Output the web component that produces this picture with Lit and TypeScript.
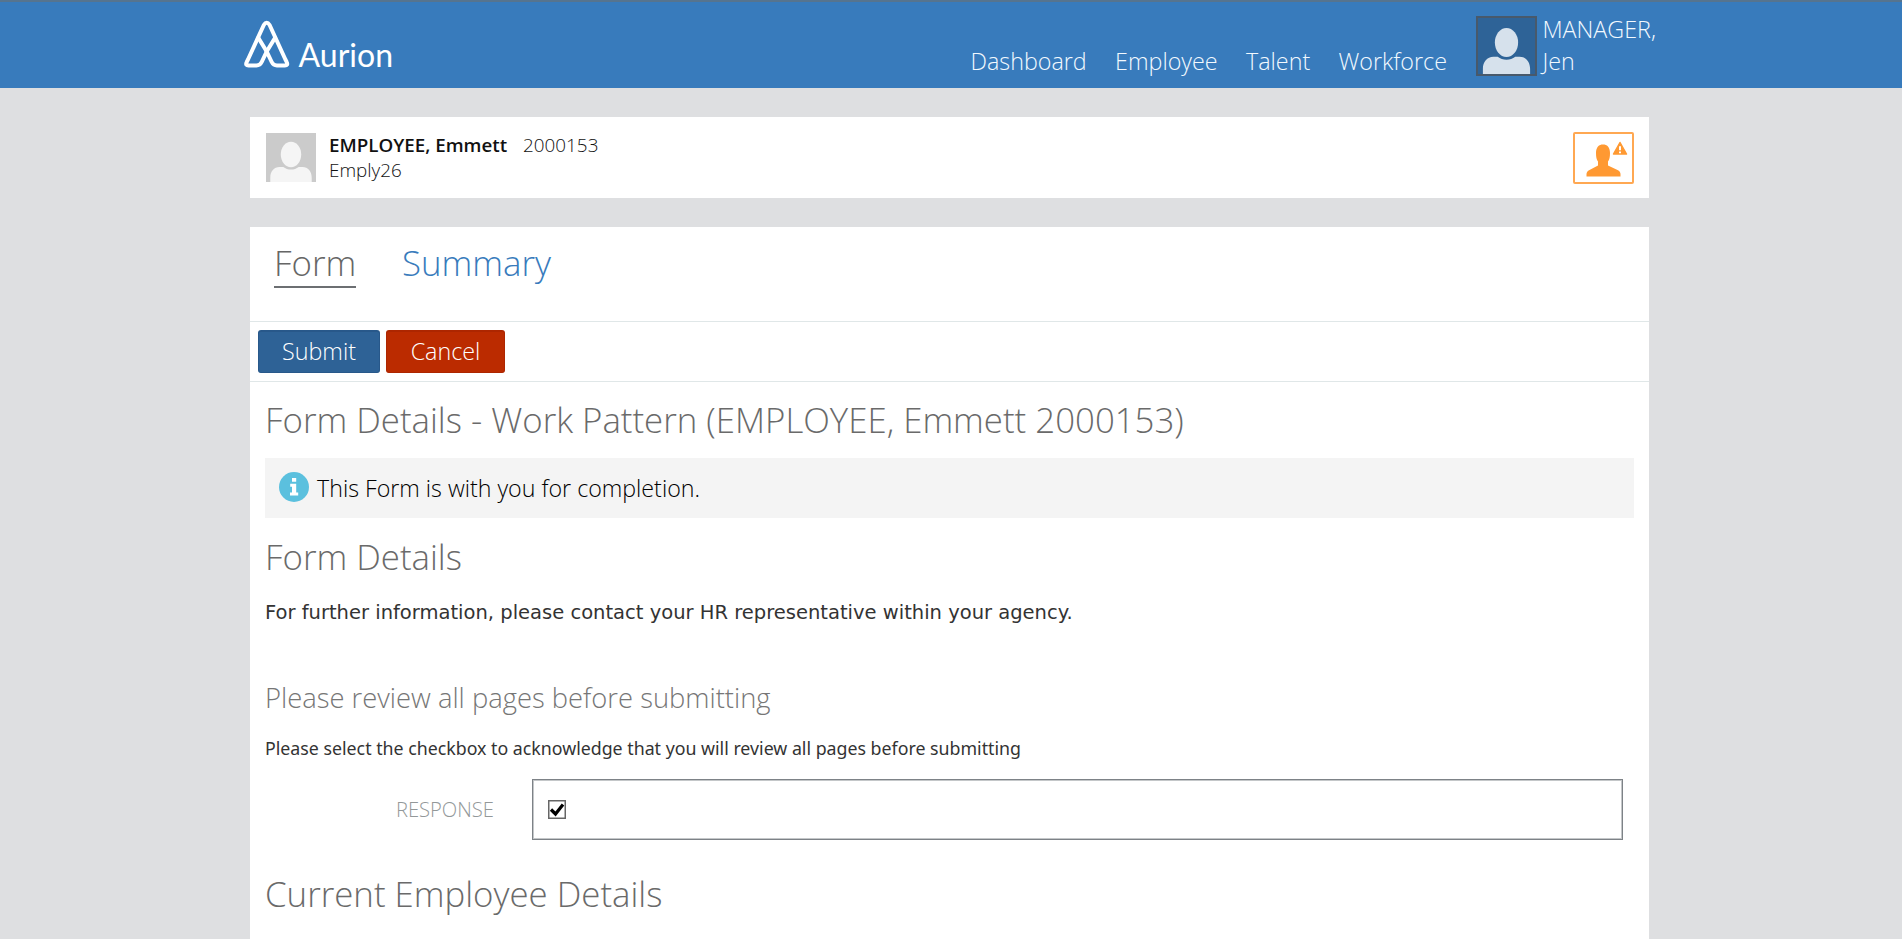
import { LitElement, html, css } from "lit";
import { customElement } from "lit/decorators.js";

@customElement("user-avatar")
class UserAvatar extends LitElement {
  static styles = css`
    :host { display: block; }
    svg { display: block; width: 100%; height: 100%; }
  `;
  render() {
    return html`<svg viewBox="0 0 50 49" preserveAspectRatio="none" fill="currentColor">
      <ellipse cx="25" cy="21.5" rx="10.2" ry="12.7"></ellipse>
      <path d="M4.3 49v-4.500C4.300 38.500 8 34 13.500 34h3.800c2.200 1.700 4.800 2.600 7.700 2.600s5.500-.9 7.700-2.600h3.800c5.500 0 9.200 4.500 9.200 10.500V49z"></path>
    </svg>`;
  }
}

@customElement("aurion-logo")
class AurionLogo extends LitElement {
  static styles = css`
    :host { display: block; }
    svg { display: block; overflow: visible; }
    .mark { fill: none; stroke: #fff; stroke-width: 4; stroke-linejoin: round; stroke-linecap: round; }
    .word { font: 400 32px Lato, "Open Sans", sans-serif; fill: #fff; }
  `;
  render() {
    return html`<svg width="160" height="56" viewBox="0 0 160 56">
      <g class="mark">
        <path d="M22.700 31.500L14.300 17.700"></path>
        <path d="M22.700 31.500L31.100 17.700"></path>
        <path d="M22.700 31.500L17.700 42Q16 45.500 12.500 45.500H4.500Q1.200 45.500 2.600 42.300Q3 41.300 4 39.500L19.800 5Q22.700 .5 25.600 5L41.400 39.500Q42.400 41.300 42.800 42.300Q44.200 45.500 40.900 45.500H32.900Q29.400 45.500 27.700 42Z"></path>
      </g>
      <text class="word" x="54.500" y="47" textLength="94.500" lengthAdjust="spacingAndGlyphs">Aurion</text>
    </svg>`;
  }
}

@customElement("app-root")
class AppRoot extends LitElement {
  static styles = css`
    * { box-sizing: border-box; }
    :host {
      display: block; height: 939px; overflow: hidden; background: #dedfe1; color: #111;
      font-family: "Open Sans", "Noto Sans", sans-serif; font-weight: 300;
    }
    h1, h2, h3, p { margin: 0; font-weight: 300; white-space: nowrap; }
    header {
      display: flex; align-items: flex-start; height: 88px; padding-left: 244px;
      background: #387bbc; border-top: 2px solid #56748f; color: #f2f9ff;
      font-size: 23.3px; line-height: 32px;
    }
    aurion-logo { margin-top: 18px; width: 160px; }
    nav { display: flex; gap: 28.4px; margin: 43px 0 0 566.5px; }
    .me { display: flex; margin: 11px 0 0 29.5px; }
    .pic { width: 61px; height: 60px; margin: 3px 5px 0 0; border: 2px solid #48596b; background: #2e6397; color: #d6e1ec; }
    .pic user-avatar { height: 56px; }
    main { width: 1399px; margin-left: 250px; }
    .card { background: #fff; }
    .person { display: flex; height: 81px; margin-top: 29px; padding: 15px 15px 0 16px; font-size: 18.85px; line-height: 25px; }
    .person user-avatar { width: 50px; height: 49px; margin: 1px 13px 0 0; background: #cbcbcb; color: #f5f5f5; }
    .person b { font-weight: 600; font-size: 18.75px; }
    .person .num { margin-left: 16px; }
    .alert { width: 61px; height: 52px; margin-left: auto; border: 2px solid #ffa852; border-radius: 2px; }
    .alert svg { display: block; }
    .form { margin-top: 29px; height: 712px; }
    .tabs { display: flex; height: 95px; padding: 11px 0 0 24px; gap: 46px; border-bottom: 1px solid #e0e7e8; font-size: 34.8px; line-height: 50px; color: #387bbc; }
    .tab { height: 50px; }
    .tab.on { width: 82px; color: #666; border-bottom: 2px solid #6c6f72; }
    .actions { display: flex; gap: 6px; height: 60px; padding: 8px 8px 0; border-bottom: 1px solid #e0e7e8; }
    .btn { height: 43px; padding: 0; border: 1px solid #28588a; border-top-width: 2px; border-radius: 3px; background: #2e6296; color: #fff; font: 300 23.3px/38px "Open Sans", sans-serif; text-align: center; padding-bottom: 2px; }
    .submit { width: 122px; }
    .cancel { width: 119px; background: #bb2b00; border-color: #ad2600; }
    .body { padding: 14px 15px 0; }
    h1, h2 { font-size: 34.8px; line-height: 48px; color: #6a6a6a; }
    .notice { display: flex; align-items: center; height: 60px; margin: 14px 0 15px; padding-left: 14px; gap: 8px; background: #f4f4f4; font-size: 23.23px; line-height: 60px; color: #000; }
    .notice svg { margin-bottom: 2px; }
    .contact { margin-top: 18px; font: 400 19.53px/28px "DejaVu Sans", sans-serif; color: #333; }
    h3 { margin-top: 52px; font-size: 27.36px; line-height: 38px; color: #767676; }
    .ack { margin-top: 18px; font: 400 17.77px/26px "Noto Sans", sans-serif; color: #333; }
    .row { display: flex; height: 61px; margin: 18px 0 30px; }
    .label { width: 267px; padding-right: 38px; text-align: right; font-size: 20.2px; line-height: 61px; color: #939899; }
    .field { display: flex; align-items: center; width: 1091px; border: 1px solid #7d8287; box-shadow: inset 0 0 0 1px #c4c7c9; padding-left: 15px; }
  `;
  render() {
    return html`
      <header>
        <aurion-logo></aurion-logo>
        <nav>${["Dashboard", "Employee", "Talent", "Workforce"].map((n) => html`<span>${n}</span>`)}</nav>
        <div class="me">
          <div class="pic"><user-avatar></user-avatar></div>
          <div>MANAGER,<br />Jen</div>
        </div>
      </header>
      <main>
        <section class="card person">
          <user-avatar></user-avatar>
          <div><b>EMPLOYEE, Emmett</b><span class="num">2000153</span><br />Emply26</div>
          <div class="alert">
            <svg width="57" height="48" viewBox="0 0 57 48">
              <path fill="#ff9932" d="M21 19c0-6 3-8.500 7-8.500s7 2.500 7 8.500c0 4-.5 6.500-2 8.500v4L42.500 36c2 1 3 2.500 3 4v2.500H11.500V40c0-1.500 1-3 3-4l8.500-4.500v-4C21.500 25.500 21 23 21 19z"></path>
              <path fill="#ff9932" stroke="#ff9932" stroke-width="1.500" stroke-linejoin="round" d="M45 8.500L51.500 20H38.500z"></path>
              <path stroke="#fff" stroke-width="2" d="M45 12.200v4M45 17.500v1.800"></path>
            </svg>
          </div>
        </section>
        <section class="card form">
          <div class="tabs"><div class="tab on">Form</div><div class="tab">Summary</div></div>
          <div class="actions">
            <button class="btn submit">Submit</button>
            <button class="btn cancel">Cancel</button>
          </div>
          <div class="body">
            <h1>Form Details - Work Pattern (EMPLOYEE, Emmett 2000153)</h1>
            <div class="notice">
              <svg width="30" height="30" viewBox="0 0 30 30">
                <circle cx="15" cy="15" r="15" fill="#5bc0de"></circle>
                <path fill="#fff" d="M13 6h4.200v3.700H13zM11.200 11.700h6v8.800h2v3h-8.200v-3h2v-5.800h-1.800z"></path>
              </svg>
              <span>This Form is with you for completion.</span>
            </div>
            <h2>Form Details</h2>
            <p class="contact">For further information, please contact your HR representative within your agency.</p>
            <h3>Please review all pages before submitting</h3>
            <p class="ack">Please select the checkbox to acknowledge that you will review all pages before submitting</p>
            <div class="row">
              <div class="label">RESPONSE</div>
              <div class="field">
                <svg width="18" height="19" viewBox="0 0 18 19">
                  <rect x=".75" y=".75" width="16.500" height="17.500" fill="#fff" stroke="#666" stroke-width="1.500"></rect>
                  <path d="M3 9.500l4.500 4.500L15 4.500" fill="none" stroke="#000" stroke-width="3.200"></path>
                </svg>
              </div>
            </div>
            <h2>Current Employee Details</h2>
          </div>
        </section>
      </main>
    `;
  }
}
